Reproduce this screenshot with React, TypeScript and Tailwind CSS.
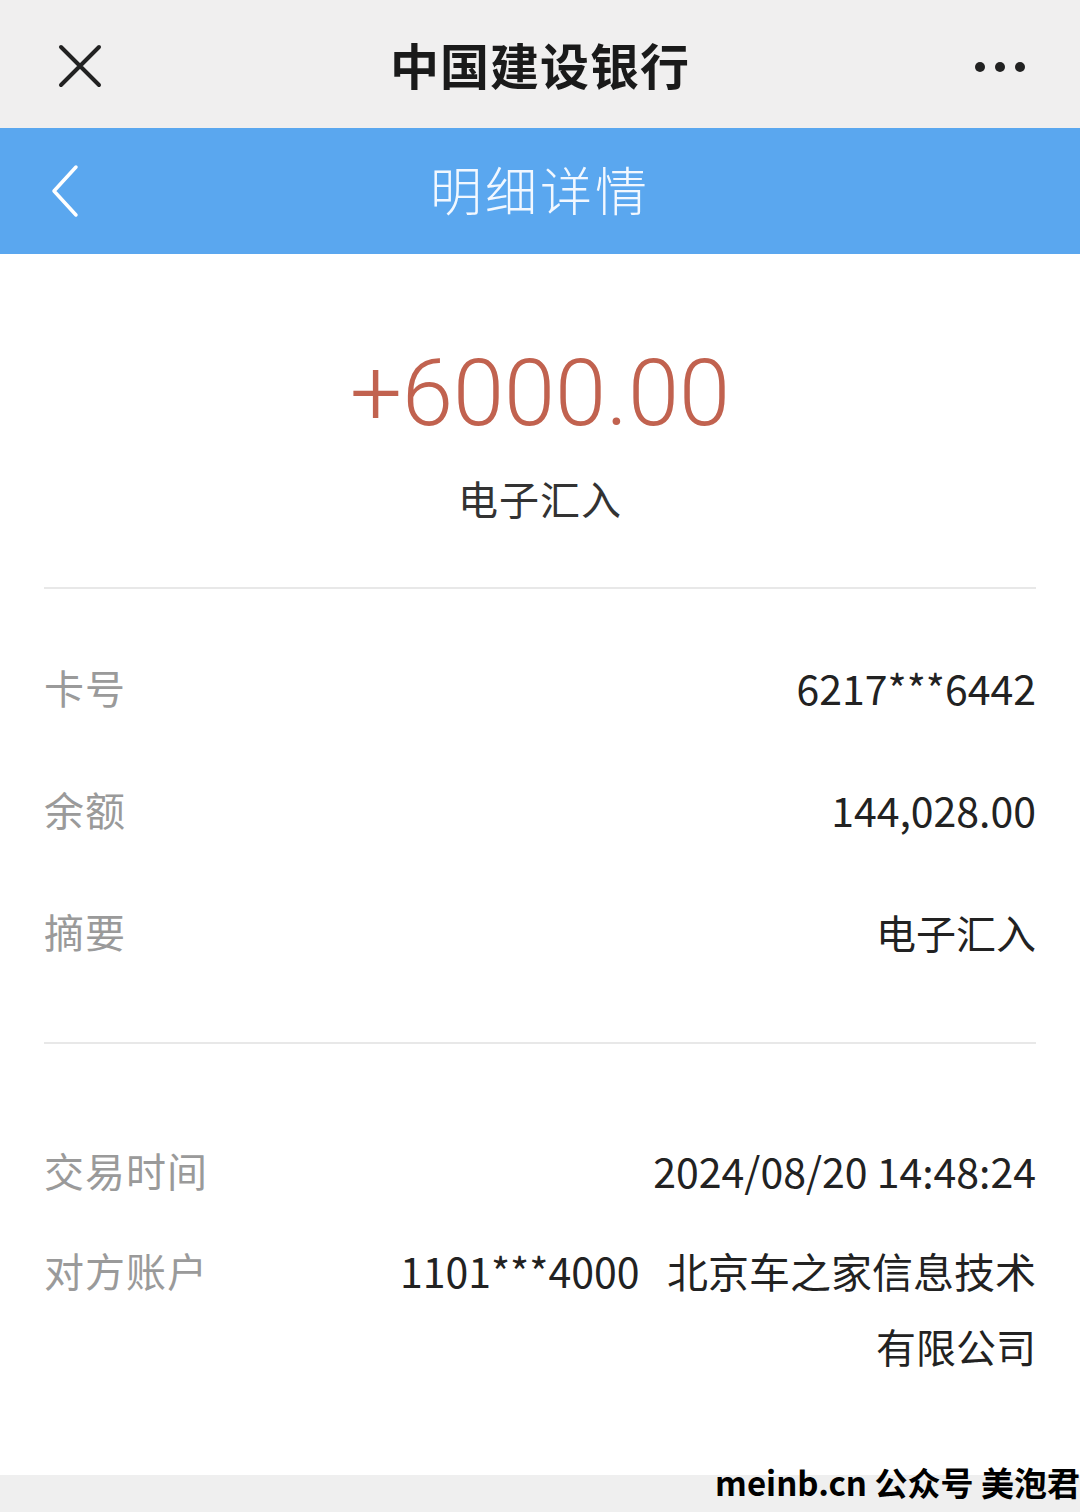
import React from "react";

const cjk = { fontFamily: '"Noto Sans CJK SC", "Noto Sans", sans-serif' };

function Row({ label, value, className = "" }: { label: string; value: React.ReactNode; className?: string }) {
  return (
    <div className={"flex items-start justify-between " + className}>
      <div className="text-[40px] leading-[50px] text-[#9a9a9a] whitespace-nowrap tracking-[1px]">{label}</div>
      <div className="text-[41px] leading-[50px] text-[#222] text-right whitespace-nowrap">{value}</div>
    </div>
  );
}

export default function App() {
  return (
    <div className="w-[1080px] h-[1512px] bg-white flex flex-col overflow-hidden" style={cjk}>
      {/* WeChat header */}
      <div className="h-[128px] bg-[#f0efef] flex items-center justify-between px-[56px] relative">
        <svg width="46" height="46" viewBox="0 0 46 46" className="ml-[1px] mt-[4px]">
          <path d="M4 4 L42 42 M42 4 L4 42" stroke="#222" strokeWidth="4" strokeLinecap="round" />
        </svg>
        <div className="absolute left-0 right-0 top-0 h-[128px] flex items-center justify-center pointer-events-none">
          <span className="text-[49px] font-bold text-[#1a1a1a] tracking-[1px]">中国建设银行</span>
        </div>
        <svg width="52" height="12" viewBox="0 0 52 12" className="mr-[-2px] mt-[6px]">
          <circle cx="6" cy="6" r="5" fill="#222" />
          <circle cx="26" cy="6" r="5" fill="#222" />
          <circle cx="46" cy="6" r="5" fill="#222" />
        </svg>
      </div>
      {/* Blue bar */}
      <div className="h-[126px] bg-[#5aa7ef] flex items-center relative">
        <svg width="34" height="54" viewBox="0 0 34 54" className="ml-[48px]">
          <path d="M28 3 L6 27 L28 51" stroke="#ffffff" strokeWidth="3.5" fill="none" strokeLinecap="round" strokeLinejoin="round" />
        </svg>
        <div className="absolute inset-0 flex items-center justify-center pb-[4px]">
          <span className="text-[52px] font-light text-[#f2f8ff] tracking-[3px]">明细详情</span>
        </div>
      </div>
      {/* Amount */}
      <div className="flex flex-col items-center pt-[90px]">
        <div
          className="text-[92px] leading-[100px] text-[#c1624f] font-light"
          style={{ fontFamily: 'Roboto, "Liberation Sans", Arial, sans-serif' }}
        >
          +6000.00
        </div>
        <div className="text-[40px] leading-[50px] text-[#333] mt-[29px] tracking-[1px]">电子汇入</div>
      </div>
      <div className="mx-[44px] mt-[64px] h-[2px] bg-[#e8e8e8]" />
      {/* Rows */}
      <div className="px-[44px] flex flex-col pt-[73px] gap-[72px]">
        <Row label="卡号" value="6217***6442" />
        <Row label="余额" value="144,028.00" />
        <Row label="摘要" value={<span className="text-[40px]">电子汇入</span>} />
      </div>
      <div className="mx-[44px] mt-[85px] h-[2px] bg-[#e8e8e8]" />
      <div className="px-[44px] flex flex-col pt-[101px] gap-[50px]">
        <Row label="交易时间" value="2024/08/20 14:48:24" />
        <div className="flex items-start justify-between">
          <div className="text-[40px] leading-[50px] text-[#9a9a9a] whitespace-nowrap tracking-[1px]">对方账户</div>
          <div className="text-[41px] leading-[75px] mt-[-12px] text-[#222] text-right whitespace-nowrap">
            1101***4000&nbsp;&nbsp;&nbsp;北京车之家信息技术
            <br />
            <span className="text-[40px]">有限公司</span>
          </div>
        </div>
      </div>
      <div className="flex-1" />
      <div className="h-[37px] bg-[#efefef] relative">
        <div className="absolute right-0 bottom-[10px] text-[33px] leading-[40px] font-bold text-black whitespace-nowrap">
          meinb.cn 公众号 美泡君
        </div>
      </div>
    </div>
  );
}
